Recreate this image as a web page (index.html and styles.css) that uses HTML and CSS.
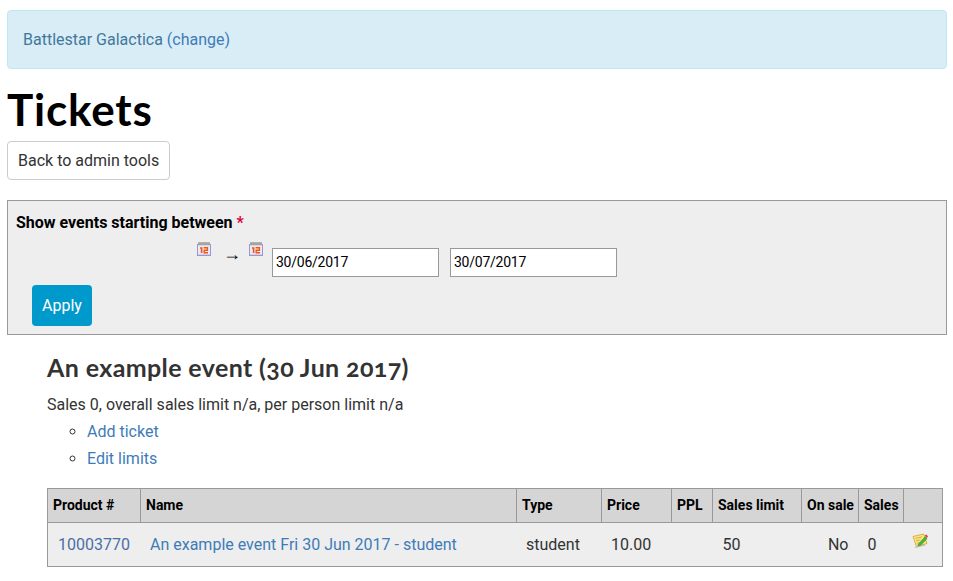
FILE: index.html
```html
<!DOCTYPE html>
<html lang="en">
<head>
<meta charset="utf-8">
<title>Tickets</title>
<link rel="stylesheet" href="styles.css">
</head>
<body>
<svg class="defs" width="0" height="0" aria-hidden="true">
  <defs>
    <symbol id="cal" viewBox="0 0 14 14">
      <rect x="0.5" y="2.5" width="13" height="11" fill="#ebe8f8" stroke="#9a97d0"/>
      <rect x="1" y="0.5" width="12" height="3" fill="#c4c4c4"/>
      <path d="M2 0v3M4 0v3M6 0v3M8 0v3M10 0v3M12 0v3" stroke="#6a6a6a" stroke-width=".7"/>
      <path d="M3 6h1.6v5" fill="none" stroke="#f2560f" stroke-width="1.6"/>
      <path d="M6.6 5.7h3.8v2.5H7.2v2.6h3.8" fill="none" stroke="#f2560f" stroke-width="1.4"/>
      <path d="M1 12.5h12" stroke="#d2cfee"/>
    </symbol>
    <symbol id="edit" viewBox="0 0 16 16">
      <path d="M1 3.5 11.5 1 15 10.5 4.5 13.5Z" fill="#f6e58a" stroke="#d8b23c"/>
      <path d="M3.5 5.5l6.5-1.6M4 8l4.5-1.2M5 10.3l3-.8" stroke="#d8b23c" fill="none"/>
      <path d="M6.5 11 13 4l2 1.6L8.5 12.4l-2.5.8Z" fill="#49b83a" stroke="#2f8c2a" stroke-width=".6"/>
      <path d="M12.6 2.6 14.4 1.4 16 3.4 14.6 5Z" fill="#d9433a"/>
      <path d="M3 14.5 13 12" stroke="#b8b8b8" stroke-width="1.2"/>
    </symbol>
  </defs>
</svg>

<div class="alert">Battlestar Galactica <a href="#">(change)</a></div>

<h1 class="page-title">Tickets</h1>

<a class="btn-default" href="#">Back to admin tools</a>

<form class="filter">
  <div class="filter-label">Show events starting between <span class="required">*</span></div>
  <div class="filter-dates">
    <svg class="cal-icon"><use href="#cal"/></svg>
    <span class="arrow">→</span>
    <svg class="cal-icon"><use href="#cal"/></svg>
    <input class="date-input first" type="text" value="30/06/2017">
    <input class="date-input" type="text" value="30/07/2017">
  </div>
  <button class="btn-apply" type="button">Apply</button>
</form>

<section class="event">
  <h2 class="event-title">An example event (30 Jun 2017)</h2>
  <p class="event-summary">Sales 0, overall sales limit n/a, per person limit n/a</p>
  <ul class="event-links">
    <li><a href="#">Add ticket</a></li>
    <li><a href="#">Edit limits</a></li>
  </ul>
  <table class="tickets">
    <colgroup>
      <col class="c-product"><col class="c-name"><col class="c-type"><col class="c-price"><col class="c-ppl"><col class="c-limit"><col class="c-onsale"><col class="c-sales"><col class="c-edit">
    </colgroup>
    <thead>
      <tr>
        <th>Product #</th><th>Name</th><th>Type</th><th>Price</th><th>PPL</th><th>Sales limit</th><th>On sale</th><th>Sales</th><th></th>
      </tr>
    </thead>
    <tbody>
      <tr>
        <td class="pad-product"><a class="visited" href="#">10003770</a></td>
        <td class="pad-name"><a href="#">An example event Fri 30 Jun 2017 - student</a></td>
        <td class="pad-type">student</td>
        <td class="pad-price">10.00</td>
        <td></td>
        <td class="pad-limit">50</td>
        <td class="align-right">No</td>
        <td class="pad-sales">0</td>
        <td class="cell-edit"><svg class="edit-icon"><use href="#edit"/></svg></td>
      </tr>
    </tbody>
  </table>
</section>
</body>
</html>
```

FILE: styles.css
```css
* { box-sizing: border-box; }
html, body { background: #fff; }
body {
  margin: 0;
  padding: 10px 6px 0 7px;
  font-family: Roboto, "Liberation Sans", sans-serif;
  font-size: 16px;
  line-height: 24px;
  color: #333;
}
a { color: #3d7cb8; text-decoration: none; }
.defs { position: absolute; }

.alert {
  height: 59px;
  padding: 17px 15px;
  color: #41789a;
  background: #d9edf7;
  border: 1px solid #bce8f1;
  border-radius: 4px;
}

.page-title {
  margin: 17px 0 9px;
  font-family: Lato, "Open Sans", sans-serif;
  font-weight: 700;
  font-size: 44px;
  line-height: 46px;
  letter-spacing: .8px;
  color: #000;
}

.btn-default {
  display: block;
  width: 163px;
  height: 39px;
  padding: 7px 10px;
  border: 1px solid #ccc;
  border-radius: 4px;
  color: #333;
  background: #fff;
  white-space: nowrap;
}

.filter {
  height: 135px;
  margin-top: 20px;
  padding: 10px 8px 0;
  background: #eee;
  border: 1px solid #999;
}
.filter-label { font-weight: 700; color: #000; }
.required { color: #d9003a; }
.filter-dates {
  display: flex;
  align-items: flex-start;
  height: 29px;
  margin-top: 13px;
  padding-left: 181px;
  color: #000;
}
.cal-icon { width: 14px; height: 14px; margin-top: -6px; flex: none; }
.arrow {
  width: 38px;
  padding-left: 4px;
  font-family: "Liberation Serif", serif;
  font-size: 18px;
  line-height: 12px;
  text-align: center;
}
.date-input {
  width: 167px;
  height: 29px;
  margin-left: 11px;
  padding: 0 3px 2px;
  font: 14px Roboto, sans-serif;
  letter-spacing: -.25px;
  color: #000;
  background: #fff;
  border: 1px solid #999;
  border-radius: 0;
}
.date-input.first { margin-left: 9px; }
.btn-apply {
  display: block;
  width: 60px;
  height: 41px;
  margin: 8px 0 0 16px;
  padding: 0;
  font: 16px Roboto, sans-serif;
  color: #fff;
  background: #0099cc;
  border: 0;
  border-radius: 4px;
}

.event { padding: 0 4px 0 40px; }
.event-title {
  margin: 19px 0 12px;
  font-family: Lato, "Open Sans", sans-serif;
  font-weight: 700;
  font-size: 25px;
  line-height: 27px;
  letter-spacing: .38px;
  font-variant-numeric: oldstyle-nums;
  color: #333;
}
.event-summary { margin: 0; }
.event-links { margin: 1px 0 0; padding: 0 0 0 40px; list-style: circle; line-height: 27px; }

.tickets {
  width: 895px;
  margin-top: 16px;
  table-layout: fixed;
  border-collapse: collapse;
  background: #eee;
  border: 1px solid #999;
}
.c-product { width: 93px; }
.c-name { width: 376px; }
.c-type { width: 85px; }
.c-price { width: 70px; }
.c-ppl { width: 41px; }
.c-limit { width: 89px; }
.c-onsale { width: 57px; }
.c-sales { width: 45px; }
.c-edit { width: 39px; }

.tickets th {
  height: 34px;
  padding: 0 5px 2px;
  font-size: 14px;
  font-weight: 700;
  text-align: left;
  color: #000;
  background: #d5d5d5;
  border: 1px solid #999;
  white-space: nowrap;
}
.tickets td { height: 44px; padding: 0; white-space: nowrap; }
.pad-product { padding-left: 10px !important; }
.pad-product .visited { color: #4a6ea8; }
.pad-name { padding-left: 9.5px !important; }
.pad-type { padding-left: 9.5px !important; }
.pad-price { padding-left: 9.5px !important; }
.pad-limit { padding-left: 10px !important; }
.align-right { text-align: right; padding-right: 10px !important; }
.pad-sales { padding-left: 9px !important; }
.cell-edit { padding-left: 8px !important; vertical-align: top; }
.edit-icon { display: block; width: 16px; height: 16px; margin-top: 10px; }
```
